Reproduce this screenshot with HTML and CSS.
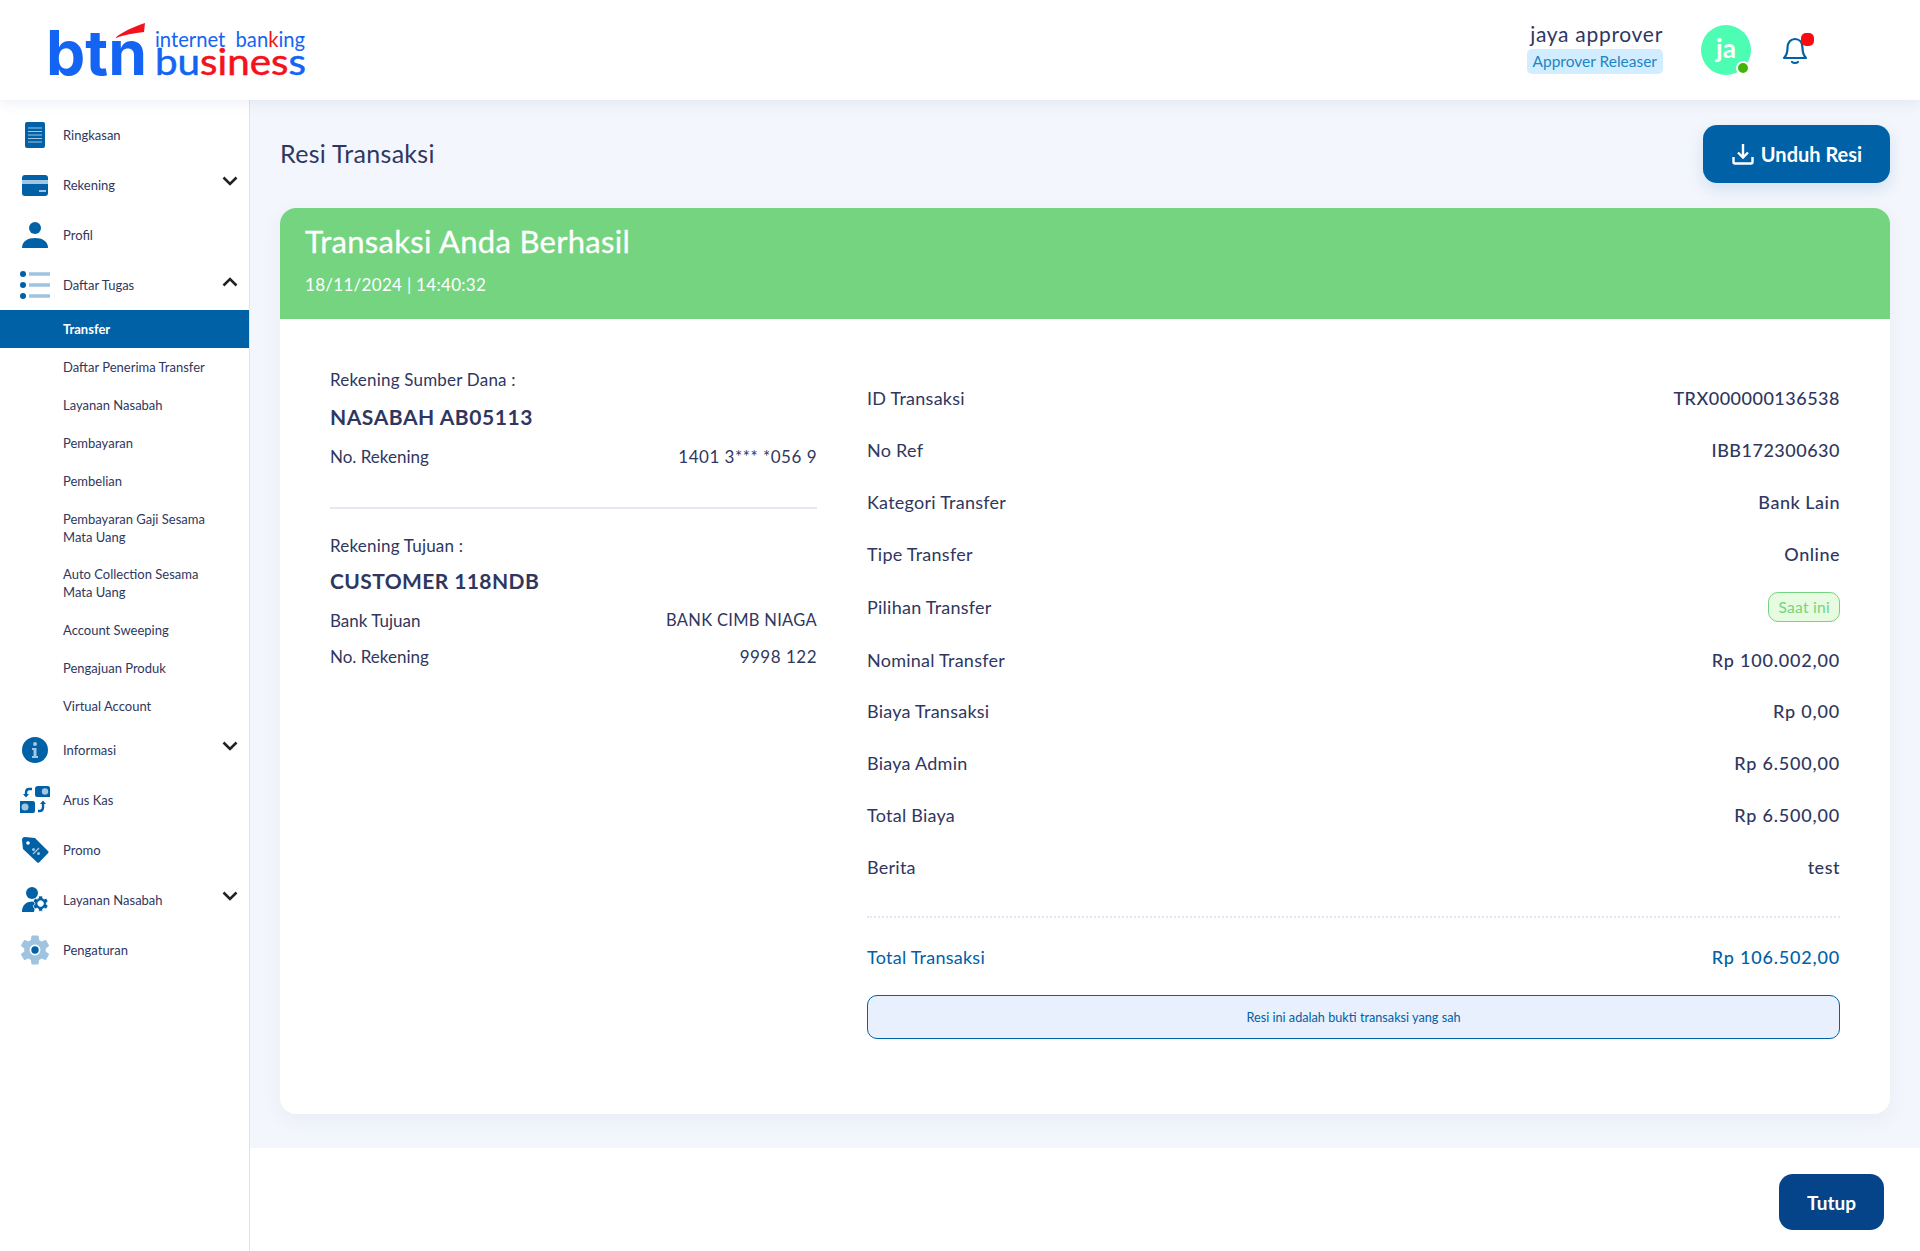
FILE: index.html
```html
<!DOCTYPE html>
<html lang="id">
<head>
    <meta charset="UTF-8">
    <meta name="viewport" content="width=device-width, initial-scale=1.0">
    <title>Resi Transaksi</title>
    <link rel="stylesheet" href="styles.css">
</head>
<body>
    <header class="topbar">
        <svg class="logo" viewBox="0 0 260 60" width="260" height="60">
            <path d="M65 17C72 11 83 6 95 2l-1 9C84 12 74 14 65 17z" fill="#f5111b"/>
            <text class="logo-btn" x="-4" y="54" textLength="101" lengthAdjust="spacingAndGlyphs">btn</text>
            <text class="logo-top" x="105" y="26" textLength="150" lengthAdjust="spacingAndGlyphs">internet  ban<tspan class="logo-red">k</tspan>ing</text>
            <text class="logo-bottom" x="105" y="54" textLength="151" lengthAdjust="spacingAndGlyphs">bu<tspan class="logo-red">sines</tspan>s</text>
        </svg>
        <div class="user">
            <div class="user-info">
                <div class="user-name">jaya approver</div>
                <div class="user-role">Approver Releaser</div>
            </div>
            <div class="avatar">ja<span class="avatar-dot"></span></div>
            <div class="bell">
                <svg viewBox="0 0 28 32" width="28" height="32"><path d="M3 24c3-3 3.500-6 3.500-10C6.500 8 10 5 14 5s7.500 3 7.500 9c0 4 .5 7 3.500 10z" fill="none" stroke="#0061a7" stroke-width="2.200" stroke-linejoin="round"/><path d="M11 28c1.500 1.300 4.500 1.300 6 0" fill="none" stroke="#0061a7" stroke-width="2.200" stroke-linecap="round"/></svg>
                <span class="bell-dot"></span>
            </div>
        </div>
    </header>

    <div class="layout">
        <nav class="sidebar">
            <a class="nav-item">
                <svg class="nav-icon" viewBox="0 0 30 30"><rect x="5" y="2" width="20" height="26" rx="2" fill="#0061a7"/><path d="M8 8h14M8 11.500h14M8 15h14M8 18.500h14M8 22h14" stroke="#a5c6e2" stroke-width="1.200"/></svg>
                <span>Ringkasan</span>
            </a>
            <a class="nav-item">
                <svg class="nav-icon" viewBox="0 0 30 30"><rect x="2" y="5" width="26" height="21" rx="3" fill="#0061a7"/><rect x="2" y="10" width="26" height="4" fill="#a5c6e2"/><rect x="19" y="20" width="7" height="2" fill="#a5c6e2"/></svg>
                <span>Rekening</span>
                <svg class="chevron" viewBox="0 0 16 10"><path d="M1.500 1.500L8 8l6.500-6.500" /></svg>
            </a>
            <a class="nav-item">
                <svg class="nav-icon" viewBox="0 0 30 30"><circle cx="15" cy="8" r="6" fill="#0061a7"/><path d="M2 28c0-7 6-10 13-10s13 3 13 10z" fill="#0061a7"/></svg>
                <span>Profil</span>
            </a>
            <a class="nav-item">
                <svg class="nav-icon" viewBox="0 0 30 30"><circle cx="3" cy="4" r="3" fill="#0061a7"/><circle cx="3" cy="15" r="3" fill="#0061a7"/><circle cx="3" cy="26" r="3" fill="#0061a7"/><path d="M9 4h21M9 15h21M9 26h21" stroke="#9fc3e0" stroke-width="3.500"/></svg>
                <span>Daftar Tugas</span>
                <svg class="chevron chevron-up" viewBox="0 0 16 10"><path d="M1.500 8.500L8 2l6.500 6.500" /></svg>
            </a>
            <ul class="subnav">
                <li class="active">Transfer</li>
                <li>Daftar Penerima Transfer</li>
                <li>Layanan Nasabah</li>
                <li>Pembayaran</li>
                <li>Pembelian</li>
                <li class="double">Pembayaran Gaji Sesama<br>Mata Uang</li>
                <li class="double">Auto Collection Sesama<br>Mata Uang</li>
                <li>Account Sweeping</li>
                <li>Pengajuan Produk</li>
                <li>Virtual Account</li>
            </ul>
            <a class="nav-item nav-item-after">
                <svg class="nav-icon" viewBox="0 0 30 30"><circle cx="15" cy="15" r="13" fill="#0061a7"/><circle cx="15" cy="9" r="2" fill="#a5c6e2"/><path d="M12 13h4.500v8H18v2h-6v-2h1.500v-6H12z" fill="#a5c6e2"/></svg>
                <span>Informasi</span>
                <svg class="chevron" viewBox="0 0 16 10"><path d="M1.500 1.500L8 8l6.500-6.500" /></svg>
            </a>
            <a class="nav-item">
                <svg class="nav-icon" viewBox="0 0 30 30"><path d="M18 1h10c1 0 2 1 2 2v9H17c-1 0-2-1-2-2V4c0-2 1-3 3-3z" fill="#0061a7"/><circle cx="25" cy="6.500" r="3.200" fill="#a5c6e2"/><path d="M0 16h13c1 0 2 1 2 2v8c0 1-1 2-2 2H0z" fill="#0061a7"/><circle cx="5" cy="22" r="3.500" fill="#a5c6e2"/><path d="M12 4H9C7 4 6 5.500 6 8v3" fill="none" stroke="#0061a7" stroke-width="2.400"/><path d="M3 9l3 3.500L9 9z" fill="#0061a7"/><path d="M18 26h2c2 0 3-1.500 3-4v-3" fill="none" stroke="#0061a7" stroke-width="2.400"/><path d="M20 19l3-3.500 3 3.500z" fill="#0061a7"/></svg>
                <span>Arus Kas</span>
            </a>
            <a class="nav-item">
                <svg class="nav-icon" viewBox="0 0 30 30"><path d="M5 2l10 1 13 13c.7.7.7 1.600 0 2.300l-8.700 9c-.7.700-1.600.700-2.300 0L3 14 2 5c0-2 1-3 3-3z" fill="#0061a7"/><circle cx="8" cy="8" r="1.800" fill="#fff"/><path d="M13 19l6-6" stroke="#a5c6e2" stroke-width="1.200"/><circle cx="13.500" cy="14.500" r="1.500" fill="#a5c6e2"/><circle cx="18.500" cy="18.500" r="1.500" fill="#a5c6e2"/></svg>
                <span>Promo</span>
            </a>
            <a class="nav-item">
                <svg class="nav-icon" viewBox="0 0 30 30"><circle cx="12" cy="8" r="6" fill="#0061a7"/><path d="M2 27c0-1.500 0-5 3-8 3-2.500 8-3 11-2l-2 10z" fill="#0061a7"/><path transform="translate(11 9) scale(.8)" d="M19.140 12.940c.04-.3.06-.61.06-.94 0-.32-.02-.64-.07-.94l2.030-1.580c.18-.14.23-.41.12-.61l-1.920-3.320c-.12-.22-.37-.29-.59-.22l-2.390.96c-.5-.38-1.030-.7-1.620-.94l-.36-2.540c-.04-.24-.24-.41-.48-.41h-3.840c-.24 0-.43.17-.47.41l-.36 2.540c-.59.24-1.130.57-1.620.94l-2.390-.96c-.22-.08-.47 0-.59.22L2.740 8.870c-.12.21-.08.47.12.61l2.030 1.580c-.05.3-.09.63-.09.94s.02.64.07.94l-2.030 1.580c-.18.14-.23.41-.12.61l1.920 3.320c.12.22.37.29.59.22l2.390-.96c.5.38 1.030.7 1.620.94l.36 2.540c.05.24.24.41.48.41h3.840c.24 0 .44-.17.47-.41l.36-2.540c.59-.24 1.130-.56 1.620-.94l2.390.96c.22.08.47 0 .59-.22l1.920-3.320c.12-.22.07-.47-.12-.61l-2.010-1.580zM12 15.600c-1.980 0-3.600-1.620-3.600-3.600s1.620-3.600 3.600-3.600 3.600 1.620 3.600 3.600-1.620 3.600-3.600 3.600z" fill="#0061a7" stroke="#fff" stroke-width="1"/></svg>
                <span>Layanan Nasabah</span>
                <svg class="chevron" viewBox="0 0 16 10"><path d="M1.500 1.500L8 8l6.500-6.500" /></svg>
            </a>
            <a class="nav-item">
                <svg class="nav-icon" viewBox="0 0 30 30"><path transform="translate(-3 -3) scale(1.500)" d="M19.140 12.940c.04-.3.06-.61.06-.94 0-.32-.02-.64-.07-.94l2.030-1.580c.18-.14.23-.41.12-.61l-1.920-3.320c-.12-.22-.37-.29-.59-.22l-2.390.96c-.5-.38-1.030-.7-1.620-.94l-.36-2.540c-.04-.24-.24-.41-.48-.41h-3.840c-.24 0-.43.17-.47.41l-.36 2.540c-.59.24-1.130.57-1.620.94l-2.390-.96c-.22-.08-.47 0-.59.22L2.740 8.870c-.12.21-.08.47.12.61l2.030 1.580c-.05.3-.09.63-.09.94s.02.64.07.94l-2.030 1.580c-.18.14-.23.41-.12.61l1.920 3.320c.12.22.37.29.59.22l2.390-.96c.5.38 1.030.7 1.620.94l.36 2.540c.05.24.24.41.48.41h3.840c.24 0 .44-.17.47-.41l.36-2.540c.59-.24 1.130-.56 1.620-.94l2.390.96c.22.08.47 0 .59-.22l1.920-3.320c.12-.22.07-.47-.12-.61l-2.010-1.580zM12 15.600c-1.980 0-3.600-1.620-3.600-3.600s1.620-3.600 3.600-3.600 3.600 1.620 3.600 3.600-1.620 3.600-3.600 3.600z" fill="#a0c3e0"/><circle cx="15" cy="15" r="3.700" fill="#0061a7"/></svg>
                <span>Pengaturan</span>
            </a>
        </nav>

        <div class="content">
            <main class="main">
                <div class="page-head">
                    <h1>Resi Transaksi</h1>
                    <button class="btn-download">
                        <svg viewBox="0 0 24 24" width="24" height="24"><path d="M12 2v13M7 10.500l5 5 5-5M2.500 15v5c0 1 .7 1.500 1.500 1.500h16c.8 0 1.500-.5 1.500-1.500v-5" fill="none" stroke="#fff" stroke-width="2.400"/></svg>
                        Unduh Resi
                    </button>
                </div>

                <section class="card">
                    <div class="card-head">
                        <h2>Transaksi Anda Berhasil</h2>
                        <p>18/11/2024 | 14:40:32</p>
                    </div>
                    <div class="card-body">
                        <div class="accounts">
                            <div class="account account-source">
                                <div class="account-label">Rekening Sumber Dana :</div>
                                <div class="account-name">NASABAH AB05113</div>
                                <div class="account-row"><span>No. Rekening</span><b>1401 3*** *056 9</b></div>
                            </div>
                            <div class="account account-target">
                                <div class="account-label">Rekening Tujuan :</div>
                                <div class="account-name">CUSTOMER 118NDB</div>
                                <div class="account-row"><span>Bank Tujuan</span><b class="caps">BANK CIMB NIAGA</b></div>
                                <div class="account-row"><span>No. Rekening</span><b>9998 122</b></div>
                            </div>
                        </div>
                        <div class="details">
                            <div class="detail"><span>ID Transaksi</span><b>TRX000000136538</b></div>
                            <div class="detail"><span>No Ref</span><b>IBB172300630</b></div>
                            <div class="detail"><span>Kategori Transfer</span><b>Bank Lain</b></div>
                            <div class="detail"><span>Tipe Transfer</span><b>Online</b></div>
                            <div class="detail detail-tall"><span>Pilihan Transfer</span><b class="tag">Saat ini</b></div>
                            <div class="detail"><span>Nominal Transfer</span><b class="amount">Rp 100.002,00</b></div>
                            <div class="detail"><span>Biaya Transaksi</span><b class="amount">Rp 0,00</b></div>
                            <div class="detail"><span>Biaya Admin</span><b class="amount">Rp 6.500,00</b></div>
                            <div class="detail"><span>Total Biaya</span><b class="amount">Rp 6.500,00</b></div>
                            <div class="detail"><span>Berita</span><b>test</b></div>
                            <div class="detail detail-total"><span>Total Transaksi</span><b class="amount">Rp 106.502,00</b></div>
                            <div class="notice">Resi ini adalah bukti transaksi yang sah</div>
                        </div>
                    </div>
                </section>
            </main>
            <footer class="footer">
                <button class="btn-close">Tutup</button>
            </footer>
        </div>
    </div>
</body>
</html>
```

FILE: styles.css
```css
* {
    box-sizing: border-box;
}

body {
    margin: 0;
    font-family: "Lato", "Liberation Sans", sans-serif;
    color: #2f3760;
    background: #fff;
}

.topbar {
    height: 100px;
    padding: 0 111px 0 50px;
    display: flex;
    align-items: center;
    justify-content: space-between;
    background: #fff;
    box-shadow: 0 2px 14px rgba(60, 80, 140, 0.1);
    position: relative;
    z-index: 2;
}

.logo {
    margin-top: 2px;
    overflow: visible;
}

.logo-btn {
    font-family: "Inter", sans-serif;
    font-weight: 700;
    font-size: 62px;
    fill: #1464f4;
}

.logo-top {
    font-size: 21px;
    fill: #1464f4;
    white-space: pre;
}

.logo-bottom {
    font-size: 36px;
    fill: #1464f4;
    stroke: #1464f4;
    stroke-width: 0.5px;
}

.logo-red {
    fill: #f5111b;
    stroke: #f5111b;
}

.logo-top .logo-red {
    stroke: none;
}

.user {
    display: flex;
    align-items: center;
}

.user-info {
    display: flex;
    flex-direction: column;
    align-items: flex-end;
    margin-right: 38px;
}

.user-name {
    font-size: 21px;
    line-height: 24px;
    letter-spacing: 0.7px;
    margin-top: -5px;
}

.user-role {
    margin-top: 3px;
    height: 25px;
    padding: 0 6px;
    font-size: 15.5px;
    line-height: 25px;
    color: #1c86c4;
    background: #d2edff;
    border-radius: 5px;
    white-space: nowrap;
}

.avatar {
    position: relative;
    width: 50px;
    height: 50px;
    border-radius: 50%;
    background: #4dfdb4;
    color: #fff;
    font-size: 26px;
    font-weight: 700;
    line-height: 46px;
    text-align: center;
    margin-right: 30px;
}

.avatar-dot {
    position: absolute;
    right: 1px;
    bottom: 0;
    width: 14px;
    height: 14px;
    border-radius: 50%;
    background: #46b30a;
    border: 2px solid #fff;
}

.bell {
    position: relative;
    width: 28px;
    height: 32px;
}

.bell-dot {
    position: absolute;
    top: -1px;
    right: -5px;
    width: 13px;
    height: 13px;
    border-radius: 5px;
    background: #fb0a12;
}

.layout {
    display: flex;
    height: 1151px;
}

.sidebar {
    width: 250px;
    flex-shrink: 0;
    padding-top: 10px;
    border-right: 1px solid #dfe3ea;
    background: #fff;
}

.nav-item {
    display: flex;
    align-items: center;
    height: 50px;
    padding: 0 11px 0 20px;
    font-size: 13px;
    color: #2f3760;
}

.nav-item span {
    margin-left: 13px;
    flex: 1;
}

.nav-item-after {
    margin-top: 0;
}

.nav-icon {
    width: 30px;
    height: 30px;
    flex-shrink: 0;
}

.chevron {
    width: 16px;
    height: 10px;
    margin-bottom: 8px;
    fill: none;
    stroke: #222;
    stroke-width: 2.6;
}

.chevron-up {
    margin-bottom: 6px;
}

.subnav {
    list-style: none;
    margin: 0;
    padding: 0;
}

.subnav li {
    height: 38px;
    padding: 0 12px 0 63px;
    display: flex;
    align-items: center;
    font-size: 13px;
    line-height: 18px;
    color: #2f3760;
}

.subnav li.double {
    height: 55.5px;
}

.subnav li.active {
    background: #0061a7;
    color: #fff;
    font-weight: 700;
}

.content {
    flex: 1;
    display: flex;
    flex-direction: column;
    min-width: 0;
}

.main {
    height: 1048px;
    padding: 25px 30px 0;
    background: #f3f6fc;
}

.page-head {
    height: 58px;
    display: flex;
    align-items: center;
    justify-content: space-between;
}

.page-head h1 {
    margin: 0 0 3px;
    font-size: 25px;
    font-weight: 400;
    letter-spacing: 0.3px;
}

.btn-download {
    width: 187px;
    height: 58px;
    display: flex;
    align-items: center;
    justify-content: center;
    gap: 6px;
    border: none;
    border-radius: 14px;
    background: #0061a7;
    color: #fff;
    font-family: inherit;
    font-size: 20px;
    font-weight: 700;
    box-shadow: 0 6px 16px rgba(0, 97, 167, 0.14);
}

.card {
    height: 906px;
    margin-top: 25px;
    background: #fff;
    border-radius: 16px;
    box-shadow: 0 6px 20px rgba(60, 80, 140, 0.06);
    overflow: hidden;
}

.card-head {
    height: 111px;
    padding: 13px 25px 0;
    background: #75d47f;
    color: #fff;
}

.card-head h2 {
    margin: 0;
    font-size: 31px;
    line-height: 40px;
    font-weight: 400;
    letter-spacing: 0.3px;
    -webkit-text-stroke: 0.3px #fff;
}

.card-head p {
    margin: 13px 0 0;
    font-size: 17px;
    line-height: 22px;
    letter-spacing: 0.3px;
}

.card-body {
    display: grid;
    grid-template-columns: 487px 1fr;
    column-gap: 50px;
    padding: 51px 50px 0 50px;
}

.account-source {
    padding-bottom: 33px;
    margin-bottom: 27px;
    border-bottom: 2px solid #e6e9f5;
}

.account-label {
    font-size: 17px;
    line-height: 20px;
    letter-spacing: 0.2px;
}

.account-name {
    margin-top: 12px;
    font-size: 21px;
    line-height: 30px;
    font-weight: 700;
    letter-spacing: 0.55px;
}

.account-target .account-name {
    margin-top: 10px;
    letter-spacing: 0.4px;
}

.account-row {
    display: flex;
    justify-content: space-between;
    align-items: center;
    height: 36px;
    font-size: 17px;
}

.account-name + .account-row {
    margin-top: 6px;
}

.account-row b {
    font-weight: 400;
    letter-spacing: 0.5px;
}

.account-row .caps {
    font-size: 16.5px;
    letter-spacing: 0.3px;
}

.details {
    padding-top: 2px;
}

.detail {
    display: flex;
    justify-content: space-between;
    align-items: center;
    height: 51.9px;
    font-size: 18px;
    letter-spacing: 0.25px;
}

.detail b {
    font-weight: 500;
    letter-spacing: 0.5px;
}

.detail .amount {
    letter-spacing: 0.8px;
}

.detail-tall {
    height: 54px;
}

.detail .tag {
    height: 30px;
    padding: 0 9px;
    display: flex;
    align-items: center;
    font-size: 15.5px;
    font-weight: 400;
    letter-spacing: 0.3px;
    color: #75d47f;
    background: #e6fbdf;
    border: 1px solid #75d47f;
    border-radius: 10px;
}

.detail-total {
    height: 78px;
    margin-top: 23px;
    padding-top: 1px;
    border-top: 2px dotted #e3e7f3;
    color: #0061a7;
}

.notice {
    height: 44px;
    margin-top: 1px;
    display: flex;
    align-items: center;
    justify-content: center;
    font-size: 12.7px;
    color: #0061a7;
    background: #e9f0fd;
    border: 1px solid #0061a7;
    border-radius: 10px;
}

.footer {
    flex: 1;
    display: flex;
    justify-content: flex-end;
    padding: 26px 36px 0 0;
    background: #fff;
}

.btn-close {
    width: 105px;
    height: 56px;
    border: none;
    border-radius: 14px;
    background: #054488;
    color: #fff;
    font-family: inherit;
    font-size: 19px;
    font-weight: 700;
}
```
